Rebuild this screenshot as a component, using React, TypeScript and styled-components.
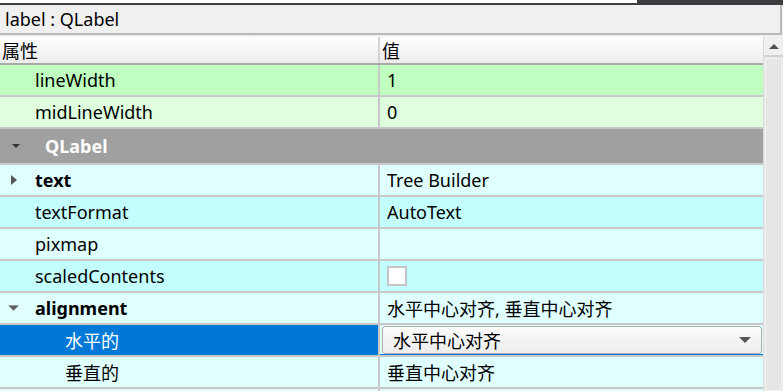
import React from 'react'
import styled, { createGlobalStyle } from 'styled-components'

const GlobalStyle = createGlobalStyle`
  html, body {
    margin: 0;
    padding: 0;
    overflow: hidden;
    background: #f0f0f0;
  }
  body {
    font-family: 'Noto Sans', 'Noto Sans CJK SC', sans-serif;
    font-size: 18px;
    color: #000;
  }
`

const Page = styled.div`
  width: 783px;
  height: 391px;
  display: flex;
  flex-direction: column;
  background: #f0f0f0;
  overflow: hidden;
`

const TopStrip = styled.div`
  height: 5px;
  flex-shrink: 0;
  display: flex;
  background: #3e3e42;
`

const LineEditEdge = styled.div`
  width: 637px;
  height: 3px;
  background: #ffffff;
`

const ObjectBar = styled.div`
  height: 28px;
  flex-shrink: 0;
  display: flex;
  align-items: center;
  padding-left: 5px;
  margin-right: 1px;
  border-right: 2px solid #b9b9b9;
  border-bottom: 2px solid #b9b9b9;
  background: #f0f0f0;
`

const Body = styled.div`
  margin-top: 2px;
  flex: 1;
  display: flex;
  min-height: 0;
`

const Table = styled.div`
  flex: 1;
  display: flex;
  flex-direction: column;
  min-width: 0;
  overflow: hidden;
`

const HeaderRow = styled.div`
  height: 26px;
  flex-shrink: 0;
  display: grid;
  grid-template-columns: 380px 1fr;
  background: linear-gradient(#ffffff, #ececec);
  border-bottom: 2px solid #aaaaaa;
`

const HeaderCell = styled.div<{ $divider?: boolean }>`
  display: flex;
  align-items: center;
  padding-left: 2px;
  border-right: ${p => (p.$divider ? '2px solid #d4d4d4' : 'none')};
`

const Row = styled.div<{ $bg: string }>`
  height: 30px;
  flex-shrink: 0;
  display: grid;
  grid-template-columns: 380px 1fr;
  background: ${p => p.$bg};
  border-bottom: 2px solid #c8c8c8;
`

const NameCell = styled.div<{ $indent: number; $bold?: boolean; $selected?: boolean }>`
  display: flex;
  align-items: center;
  padding-left: ${p => p.$indent}px;
  font-weight: ${p => (p.$bold ? 700 : 400)};
  color: ${p => (p.$selected ? '#ffffff' : '#000000')};
  background: ${p => (p.$selected ? '#0078d7' : 'transparent')};
  border-right: 2px solid #c8c8c8;
  position: relative;
`

const ValueCell = styled.div<{ $selected?: boolean }>`
  display: flex;
  align-items: center;
  padding-left: 7px;
  min-width: 0;
  border-bottom: ${p => (p.$selected ? '1px solid #0078d7' : 'none')};
`

const GroupRow = styled.div`
  height: 34px;
  flex-shrink: 0;
  display: flex;
  align-items: center;
  background: #a0a0a0;
  border-bottom: 2px solid #c8c8c8;
  color: #ffffff;
  font-weight: 700;
  padding-left: 45px;
  position: relative;
`

const Arrow = styled.svg<{ $left: number }>`
  position: absolute;
  left: ${p => p.$left}px;
  top: 50%;
  transform: translateY(-50%);
`

const CheckBox = styled.div`
  width: 16px;
  height: 16px;
  margin-left: 0;
  background: #ffffff;
  border: 2px solid #c4c4c4;
`

const Combo = styled.div`
  margin-left: -5px;
  width: 380px;
  height: 28px;
  display: flex;
  align-items: center;
  justify-content: space-between;
  padding: 0 10px 0 10px;
  box-sizing: border-box;
  border: 1px solid #adadad;
  border-radius: 3px;
  background: linear-gradient(#fbfbfb, #ededed);
`

const ScrollBar = styled.div`
  width: 19px;
  display: flex;
  flex-direction: column;
  background: #e8e8e8;
  border-left: 1px solid #dcdcdc;
`

const ScrollButton = styled.div`
  height: 18px;
  display: flex;
  align-items: center;
  justify-content: center;
  background: #f0f0f0;
  border-bottom: 2px solid #d0d0d0;
`

const ScrollThumb = styled.div`
  flex: 1;
  margin: 1px 1px 0 1px;
  background: #e6e6e6;
  border: 1px solid #f2f2f2;
`

const RightArrow = () => (
  <Arrow $left={11} width="6" height="10" viewBox="0 0 6 10">
    <path d="M0 0 L6 5 L0 10 Z" fill="#555555" />
  </Arrow>
)

const DownArrow = ({ left, color, w }: { left: number; color: string; w: number }) => (
  <Arrow $left={left} width={w} height={w / 2} viewBox="0 0 10 5">
    <path d="M0 0 L10 0 L5 5 Z" fill={color} />
  </Arrow>
)

type Prop = {
  name: string
  value?: string
  bg: string
  indent: number
  bold?: boolean
  expander?: 'right' | 'down'
  kind?: 'check' | 'combo'
  selected?: boolean
}

const props: Prop[] = [
  { name: 'text', value: 'Tree Builder', bg: '#e0ffff', indent: 35, bold: true, expander: 'right' },
  { name: 'textFormat', value: 'AutoText', bg: '#c4ffff', indent: 35 },
  { name: 'pixmap', value: '', bg: '#e0ffff', indent: 35 },
  { name: 'scaledContents', bg: '#c4ffff', indent: 35, kind: 'check' },
  { name: 'alignment', value: '水平中心对齐, 垂直中心对齐', bg: '#e0ffff', indent: 35, bold: true, expander: 'down' },
  { name: '水平的', value: '水平中心对齐', bg: '#e0ffff', indent: 65, kind: 'combo', selected: true },
  { name: '垂直的', value: '垂直中心对齐', bg: '#e0ffff', indent: 65 },
]

export default function App() {
  return (
    <Page>
      <GlobalStyle />
      <TopStrip>
        <LineEditEdge />
      </TopStrip>
      <ObjectBar>label : QLabel</ObjectBar>
      <Body>
        <Table>
          <HeaderRow>
            <HeaderCell $divider>属性</HeaderCell>
            <HeaderCell>值</HeaderCell>
          </HeaderRow>
          <Row $bg="#bfffbf">
            <NameCell $indent={35}>lineWidth</NameCell>
            <ValueCell>1</ValueCell>
          </Row>
          <Row $bg="#dfffdf">
            <NameCell $indent={35}>midLineWidth</NameCell>
            <ValueCell>0</ValueCell>
          </Row>
          <GroupRow>
            <DownArrow left={12} color="#333333" w={8} />
            QLabel
          </GroupRow>
          {props.map(p => (
            <Row key={p.name} $bg={p.bg}>
              <NameCell $indent={p.indent} $bold={p.bold} $selected={p.selected}>
                {p.expander === 'right' && <RightArrow />}
                {p.expander === 'down' && <DownArrow left={8} color="#606060" w={11} />}
                {p.name}
              </NameCell>
              <ValueCell $selected={p.selected}>
                {p.kind === 'check' && <CheckBox />}
                {p.kind === 'combo' && (
                  <Combo>
                    <span>{p.value}</span>
                    <svg width="12" height="6" viewBox="0 0 12 6">
                      <path d="M0 0 L12 0 L6 6 Z" fill="#555555" />
                    </svg>
                  </Combo>
                )}
                {!p.kind && p.value}
              </ValueCell>
            </Row>
          ))}
          <Row $bg="#e0ffff">
            <NameCell $indent={35} />
            <ValueCell />
          </Row>
        </Table>
        <ScrollBar>
          <ScrollButton>
            <svg width="10" height="5" viewBox="0 0 10 5">
              <path d="M0 5 L10 5 L5 0 Z" fill="#505050" />
            </svg>
          </ScrollButton>
          <ScrollThumb />
        </ScrollBar>
      </Body>
    </Page>
  )
}
